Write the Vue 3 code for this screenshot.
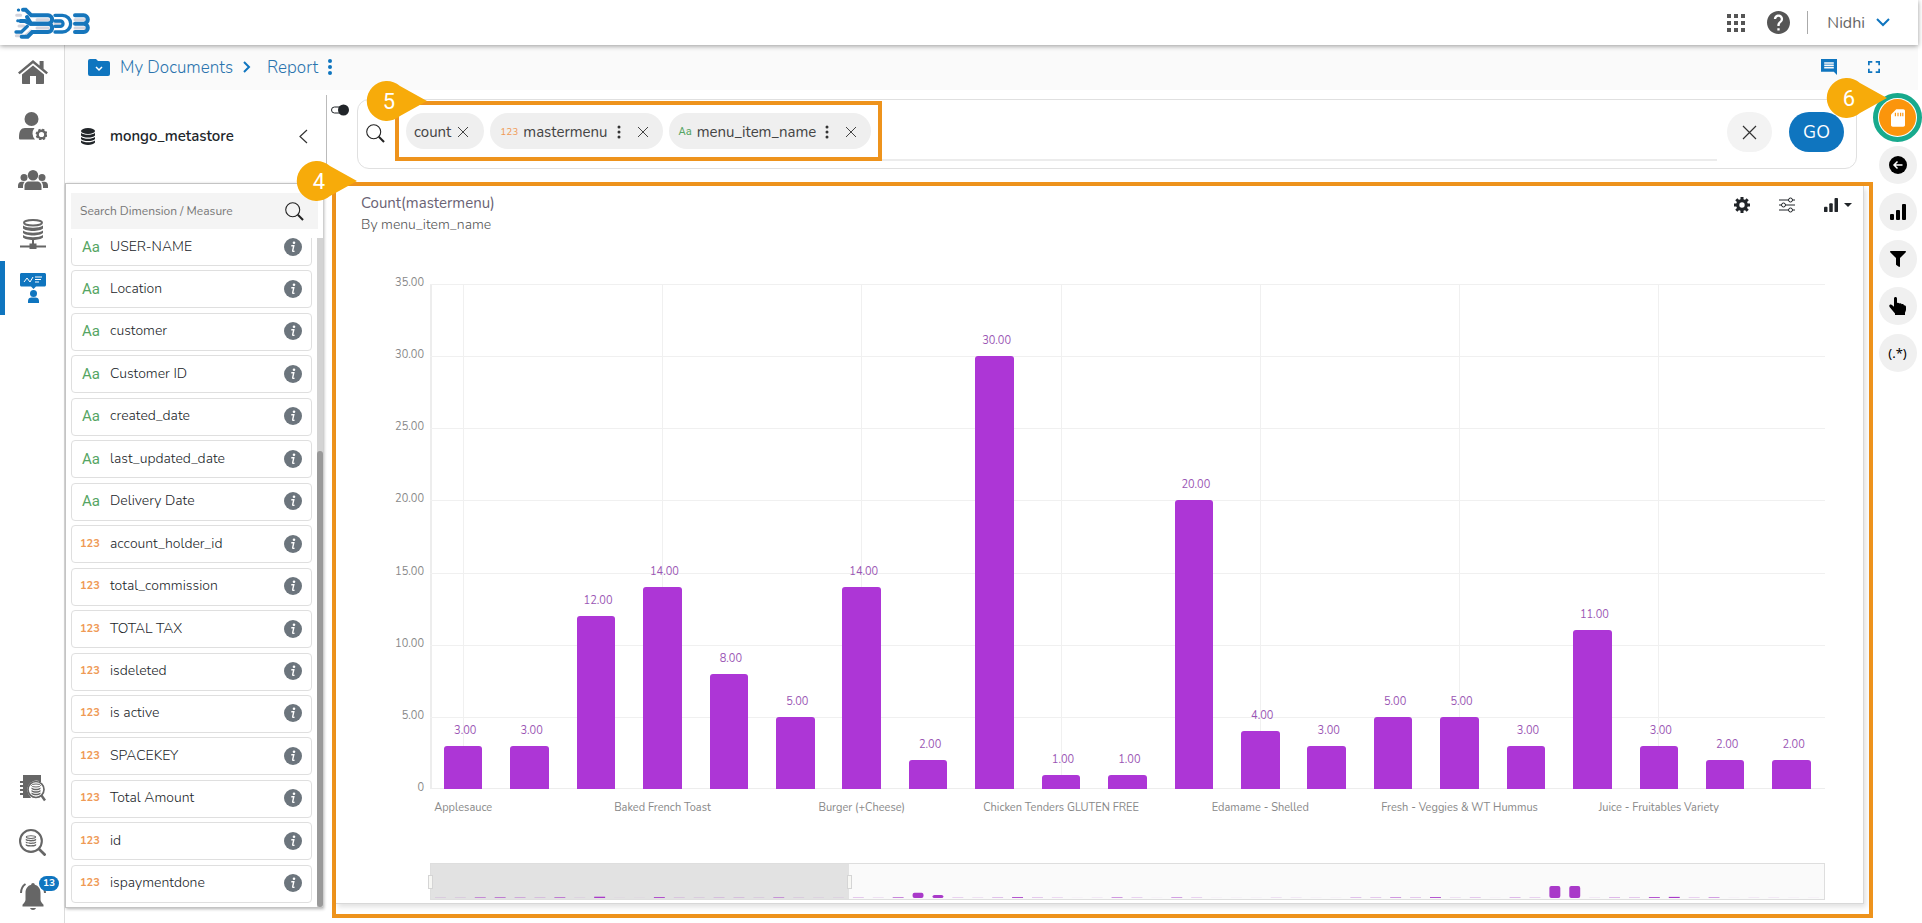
<script setup>
import { ref } from 'vue';

const icons = {
  home: { box: '0 0 30 24', w: 30, h: 24, body: '<path d="M15 0 0 12.4l1.6 1.9L15 3.3l13.4 11 1.6-1.9-4.4-3.6V1h-4v4.5z"/><path d="M15 5.4 4 14.5V23c0 .6.4 1 1 1h7v-8h6v8h7c.6 0 1-.4 1-1v-8.500z"/>' },
  userCog: { box: '0 0 28 28', w: 28, h: 28, body: '<circle cx="12.500" cy="7" r="7"/><path d="M0 25c0-6 2-9 6-9h9.500a8.500 8.500 0 0 0 .5 11.500H1.500C.6 27.500 0 27 0 26z"/><circle cx="22.500" cy="22.500" r="3.800" fill="none" stroke="currentColor" stroke-width="2.400"/><circle cx="22.500" cy="22.500" r="5" fill="none" stroke="currentColor" stroke-width="1.800" stroke-dasharray="2.200 1.727"/>' },
  users: { box: '0 0 30 20', w: 30, h: 20, body: '<circle cx="15" cy="5.200" r="5.200"/><circle cx="6" cy="7.500" r="3.500"/><circle cx="24" cy="7.500" r="3.500"/><path d="M6.500 20v-3.500c0-3.500 2-5 4.500-5h8c2.500 0 4.500 1.500 4.500 5V20zM0 18v-2.500c0-2.500 1.500-3.800 3.500-3.800h3.300C5.500 13 5 14.500 5 16.500V18zM30 18v-2.500c0-2.500-1.500-3.800-3.500-3.800h-3.300c1.300 1.300 1.800 2.800 1.800 4.800V18z"/>' },
  dataNet: { box: '0 0 26 30', w: 26, h: 30, body: '<ellipse cx="13" cy="3.700" rx="9" ry="2.700" fill="none" stroke="currentColor" stroke-width="2"/><path d="M3 6.500c4 3 16 3 20 0v3c-3 3.300-17 3.300-20 0zM3 11.500c4 3 16 3 20 0v2.500c-3 3.300-17 3.300-20 0zM3 16c4 3 16 3 20 0v2.500c-3 3.300-17 3.300-20 0zM12 20.500h2v4h2.500v2H26v2h-9.500v1.500h-7v-1.500H0v-2h9.500v-2H12z"/>' },
  analytics: { box: '0 0 26 30', w: 26, h: 30, body: '<path d="M1.500 0h23c.8 0 1.500.7 1.500 1.500V12c0 .8-.7 1.500-1.500 1.500H16l-2.500 2.500-2.500-2.500H1.500C.7 13.500 0 12.800 0 12V1.500C0 .7.7 0 1.500 0z"/><path d="m4 9 3-4 3 4 3-5M15 4h7M15 6.500h6M15 9h4" fill="none" stroke="#fff" stroke-width="1"/><circle cx="13.500" cy="20.500" r="3.500"/><path d="M8 30v-2c0-2.500 1.500-3.500 3.500-3.500h4c2 0 3.500 1 3.500 3.500v2z"/>' },
  bookSearch: { box: '0 0 26 27', w: 26, h: 27, body: '<path d="M3 0h18v7h-2V5H5V3H3z"/><path d="M3 2h16v4a9 9 0 0 0-9 15l1 2H3z"/><path d="M0 7h5M0 11h5M0 15h5M0 19h5" stroke="currentColor" stroke-width="2"/><circle cx="16" cy="14.500" r="8" fill="#fff" stroke="currentColor" stroke-width="1.700"/><path d="m21.500 20.500 3.500 5" stroke="currentColor" stroke-width="2.400"/><ellipse cx="16" cy="10.500" rx="4.500" ry="1.500" fill="none" stroke="currentColor"/><path d="M11.500 12.500c2 1.700 7 1.700 9 0v1.500c-2 1.700-7 1.700-9 0zM11.500 15c2 1.700 7 1.700 9 0v1.500c-2 1.700-7 1.700-9 0zM11.500 17.500c2 1.700 7 1.700 9 0V19c-2 1.700-7 1.700-9 0z"/>' },
  dataSearch: { box: '0 0 26 26', w: 27, h: 27, body: '<circle cx="11.500" cy="11.500" r="10.500" fill="none" stroke="currentColor" stroke-width="2"/><path d="m19 19 6.500 6.500" stroke="currentColor" stroke-width="2.600"/><ellipse cx="11.500" cy="7.800" rx="4.500" ry="1.300" fill="none" stroke="currentColor"/><path d="M6.500 9.500c2 1.500 8 1.500 10 0v1.300c-2 1.500-8 1.500-10 0zM6.500 12c2 1.500 8 1.500 10 0v1.300c-2 1.500-8 1.500-10 0zM6.500 14.500c2 1.500 8 1.500 10 0v1.300c-2 1.500-8 1.500-10 0z"/>' },
  bell: { box: '0 0 26 27', w: 26, h: 27, body: '<path d="M13 0c1 0 1.800.8 1.800 1.800 3.700 1 5.700 4 5.700 8v7c0 2 1.500 3 3 5v1.700H2.500V21.800c1.500-2 3-3 3-5v-7c0-4 2-7 5.700-8C11.200.8 12 0 13 0zM10 25h6c-.5 1.300-1.500 2-3 2s-2.500-.7-3-2z"/><path d="M5.500 1C2.500 3 1 6 1 10M20.500 1C23.500 3 25 6 25 10" fill="none" stroke="currentColor" stroke-width="2"/>' },
  back: { box: '0 0 18 18', w: 18, h: 18, body: '<circle cx="9" cy="9" r="9"/><path d="M13.500 9h-8M8.500 5.500 5 9l3.500 3.500" fill="none" stroke="#fff" stroke-width="1.500"/>' },
  bars: { box: '0 0 16 16', w: 16, h: 16, body: '<rect y="10" width="4" height="6" rx="1"/><rect x="6" y="6" width="4" height="10" rx="1"/><rect x="12" width="4" height="16" rx="1"/>' },
  filter: { box: '0 0 512 512', w: 16, h: 16, body: '<path d="M487.976 0H24.028C2.710 0-8.047 25.866 7.058 40.971L192 225.941V432c0 7.831 3.821 15.170 10.237 19.662l80 55.980C298.020 518.690 320 507.493 320 487.980V225.941l184.947-184.970C520.021 25.896 509.338 0 487.976 0z"/>' },
  hand: { box: '0 0 17 18', w: 17, h: 18, body: '<path d="M5 1.500C5 .6 5.600 0 6.500 0S8 .6 8 1.500V6c.8-.6 1.800-.4 2.300.5.900-.6 2-.3 2.500.7 1.100-.4 1.900.1 2.100 1 1.300-.2 2.100.6 2.100 1.800v2.500c0 1.500-1 2.500-1 3.500v2H6v-1.500L1 10.500C.2 9.500 0 8.500.6 8 1.400 7.200 2.600 7.500 3.300 8.200L5 9.800z"/>' }
};

const topNav = [
  { icon: 'home', label: 'Home' },
  { icon: 'userCog', label: 'Admin' },
  { icon: 'users', label: 'Users' },
  { icon: 'dataNet', label: 'Data Center' },
  { icon: 'analytics', label: 'Designer', active: true }
];
const bottomNav = [
  { icon: 'bookSearch', label: 'Catalog' },
  { icon: 'dataSearch', label: 'Data search' },
  { icon: 'bell', label: 'Notifications', badge: 13 }
];
const railTools = [
  { icon: 'back', label: 'Back' },
  { icon: 'bars', label: 'Charts' },
  { icon: 'filter', label: 'Filter' },
  { icon: 'hand', label: 'Select' }
];

const fields = [
  { name: 'USER-NAME', type: 'Aa' },
  { name: 'Location', type: 'Aa' },
  { name: 'customer', type: 'Aa' },
  { name: 'Customer ID', type: 'Aa' },
  { name: 'created_date', type: 'Aa' },
  { name: 'last_updated_date', type: 'Aa' },
  { name: 'Delivery Date', type: 'Aa' },
  { name: 'account_holder_id', type: '123' },
  { name: 'total_commission', type: '123' },
  { name: 'TOTAL TAX', type: '123' },
  { name: 'isdeleted', type: '123' },
  { name: 'is active', type: '123' },
  { name: 'SPACEKEY', type: '123' },
  { name: 'Total Amount', type: '123' },
  { name: 'id', type: '123' },
  { name: 'ispaymentdone', type: '123' }
];

const chips = ref([
  { name: 'count' },
  { name: 'mastermenu', type: '123' },
  { name: 'menu_item_name', type: 'Aa' }
]);
const query = ref('');
const fieldSearch = ref('');

const removeChip = (i) => chips.value.splice(i, 1);
const clearAll = () => {
  chips.value = [];
  query.value = '';
};

const MAX = 35;
const ticks = ['35.00', '30.00', '25.00', '20.00', '15.00', '10.00', '5.00'];
const values = [3, 3, 12, 14, 8, 5, 14, 2, 30, 1, 1, 20, 4, 3, 5, 5, 3, 11, 3, 2, 2];
// every third category gets a label and a grid line
const labels = [
  'Applesauce',
  'Baked French Toast',
  'Burger (+Cheese)',
  'Chicken Tenders GLUTEN FREE',
  'Edamame - Shelled',
  'Fresh - Veggies & WT Hummus',
  'Juice - Fruitables Variety'
];
const labelFor = (i) => (i % 3 === 0 ? labels[i / 3] : '');

// whole series, shown in the range selector
const overview = [
  ...values,
  6, 3, 14, 120, 70, 5, 3, 7, 20, 6, 4, 1, 2, 12, 5, 1, 11, 5, 1, 1, 1, 3, 2, 1, 1,
  7, 6, 12, 6, 20, 3, 6, 1, 8, 5, 280, 280, 2, 8, 6, 20, 26, 5, 11, 1, 2, 2, 1, 1
];
</script>

<template>
  <div class="page">
    <header class="topbar">
      <a href="#" class="logo" aria-label="BDB">
        <svg width="77" height="34" viewBox="40 15 231 102" fill="none" stroke-linecap="round">
          <g stroke="#d3d4dd" stroke-width="9">
            <path d="M51 43h12M58 75h14M50 104h12M78 30l14 12M80 102l14-12M112 56h34M112 81h34M166 68h14M226 56h30M226 81h30" />
          </g>
          <g stroke="#1676bc" stroke-width="12">
            <path d="M70 26h8l17 17h50a12 12 0 0 1 0 25H94L82 48" />
            <path d="M62 60h14l16 8h53a12 12 0 0 1 0 25H98l-14 14H66" />
            <path d="M49 93h16l18-17" stroke-width="10" />
            <path d="M166 43h22a25 25 0 0 1 0 50h-22M166 60h16a8 8 0 0 1 0 16h-16" stroke-width="10" />
            <path d="M226 43h26a12 12 0 0 1 0 25h-26M252 68a12 12 0 0 1 0 25h-26" />
            <path d="M56 27h1M54 59h1" stroke-width="9" />
          </g>
        </svg>
      </a>
      <div class="account">
        <button class="plain" aria-label="Apps">
          <svg width="18" height="18" viewBox="0 0 18 18" fill="#555">
            <path d="M0 0h4v4H0zM7 0h4v4H7zM14 0h4v4h-4zM0 7h4v4H0zM7 7h4v4H7zM14 7h4v4h-4zM0 14h4v4H0zM7 14h4v4H7zM14 14h4v4h-4z" />
          </svg>
        </button>
        <button class="plain" aria-label="Help">
          <svg width="23" height="23" viewBox="2 2 20 20" fill="#555">
            <path d="M12 2C6.480 2 2 6.480 2 12s4.480 10 10 10 10-4.480 10-10S17.520 2 12 2zm1 17h-2v-2h2v2zm2.070-7.750l-.9.920C13.450 12.900 13 13.500 13 15h-2v-.5c0-1.100.45-2.100 1.170-2.830l1.240-1.260c.37-.36.59-.86.59-1.410 0-1.100-.9-2-2-2s-2 .9-2 2H8c0-2.210 1.790-4 4-4s4 1.790 4 4c0 .88-.36 1.680-.93 2.250z" />
          </svg>
        </button>
        <span class="split"></span>
        <button class="plain user">
          Nidhi
          <svg width="14" height="9" viewBox="0 0 14 9" fill="none" stroke="#0f75bf" stroke-width="2"><path d="m1 1 6 6 6-6" /></svg>
        </button>
      </div>
    </header>

    <div class="body">
      <nav class="sidenav">
        <a v-for="item in topNav" :key="item.icon" href="#" :class="{ active: item.active }" :aria-label="item.label">
          <svg :width="icons[item.icon].w" :height="icons[item.icon].h" :viewBox="icons[item.icon].box" fill="currentColor" v-html="icons[item.icon].body"></svg>
        </a>
        <div class="spacer"></div>
        <a v-for="item in bottomNav" :key="item.icon" href="#" :aria-label="item.label">
          <svg :width="icons[item.icon].w" :height="icons[item.icon].h" :viewBox="icons[item.icon].box" fill="currentColor" v-html="icons[item.icon].body"></svg>
          <span v-if="item.badge" class="badge">{{ item.badge }}</span>
        </a>
      </nav>

      <main class="main">
        <div class="crumbs">
          <svg width="22" height="17" viewBox="0 0 22 17">
            <path d="M2 0h6l2 2h10a2 2 0 0 1 2 2v11a2 2 0 0 1-2 2H2a2 2 0 0 1-2-2V2a2 2 0 0 1 2-2z" fill="#0f75bf" />
            <path d="m8 8 3 3 3-3" fill="none" stroke="#fff" stroke-width="1.500" />
          </svg>
          <a href="#" class="docs">My Documents</a>
          <svg class="arrow" width="8" height="12" viewBox="0 0 8 12" fill="none" stroke="#0f75bf" stroke-width="2"><path d="m1 1 5 5-5 5" /></svg>
          <a href="#" class="report">Report</a>
          <button class="plain" aria-label="Report menu">
            <svg width="4" height="16" viewBox="0 0 4 16" fill="#0f75bf"><circle cx="2" cy="2" r="2" /><circle cx="2" cy="8" r="2" /><circle cx="2" cy="14" r="2" /></svg>
          </button>
          <div class="spacer"></div>
          <button class="plain comment" aria-label="Comments">
            <svg width="16" height="16" viewBox="2 2 20 20" fill="#0f75bf">
              <path d="M22 2H2v16h16l4 4zM18 14H6v-2h12v2zm0-3H6V9h12v2zm0-3H6V6h12v2z" />
            </svg>
          </button>
          <button class="plain" aria-label="Full screen">
            <svg width="12" height="12" viewBox="5 5 14 14" fill="#0f75bf">
              <path d="M7 14H5v5h5v-2H7v-3zm-2-4h2V7h3V5H5v5zm12 7h-3v2h5v-5h-2v3zM14 5v2h3v3h2V5h-5z" />
            </svg>
          </button>
        </div>

        <div class="workspace">
          <aside class="panel">
            <div class="store">
              <svg width="14" height="17" viewBox="0 0 14 17" fill="#212529">
                <ellipse cx="7" cy="3" rx="7" ry="3" />
                <path d="M0 5c3 2.400 11 2.400 14 0v2.500c-2 2.700-12 2.700-14 0zM0 9c3 2.400 11 2.400 14 0v2c-2 2.700-12 2.700-14 0zM0 12.500c3 2.400 11 2.400 14 0v2c-2 3.300-12 3.300-14 0z" />
              </svg>
              <h2>mongo_metastore</h2>
              <button class="plain" aria-label="Collapse">
                <svg width="9" height="15" viewBox="0 0 9 15" fill="none" stroke="#333" stroke-width="1.200"><path d="M8 1 1 7.500 8 14" /></svg>
              </button>
            </div>
            <div class="fields">
              <div class="field-search">
                <input v-model="fieldSearch" type="text" placeholder="Search Dimension / Measure" aria-label="Search Dimension / Measure" />
                <svg width="19" height="19" viewBox="0 0 16 16" fill="none" stroke="#222"><circle cx="6.500" cy="6.500" r="5.900" stroke-width=".9" /><path d="m10.800 10.800 4.400 4.400" stroke-width="1.700" /></svg>
              </div>
              <div class="field-scroll">
                <ul>
                  <li v-for="f in fields" :key="f.name">
                    <span class="type" :class="f.type === 'Aa' ? 'dim' : 'measure'">{{ f.type }}</span>
                    <span class="name">{{ f.name }}</span>
                    <button class="plain" :aria-label="'About ' + f.name">
                      <svg width="18" height="18" viewBox="0 0 18 18">
                        <circle cx="9" cy="9" r="9" fill="#6c757d" />
                        <circle cx="10" cy="4.800" r="1.300" fill="#fff" />
                        <path d="M7.300 7.700h2.500L8.700 12.600q-.2 1.200 1.800.6" fill="none" stroke="#fff" stroke-width="1.400" />
                      </svg>
                    </button>
                  </li>
                </ul>
                <div class="scrollbar"><div class="thumb"></div></div>
              </div>
            </div>
          </aside>

          <section class="content">
            <div class="query-row">
              <button class="plain toggle" aria-label="Toggle search mode">
                <svg width="18" height="12" viewBox="0 0 18 12"><rect x=".5" y="3" width="12" height="6" rx="3" fill="none" stroke="#212529" /><circle cx="12.500" cy="6" r="5.500" fill="#212529" /></svg>
              </button>
              <div class="query">
                <svg class="lens" width="19" height="19" viewBox="0 0 16 16" fill="none" stroke="#222"><circle cx="6.500" cy="6.500" r="5.900" stroke-width=".9" /><path d="m10.800 10.800 4.400 4.400" stroke-width="1.700" /></svg>
                <div class="chips">
                  <div class="pin pin-query">
                    <svg width="62" height="40" viewBox="0 0 62 40" fill="#f7ab0a"><path d="M62 20 35 5A20 20 0 1 0 35 35z" /></svg>
                    <span>5</span>
                  </div>
                  <div v-for="(chip, i) in chips" :key="chip.name" class="chip" :class="{ typed: chip.type }">
                    <span v-if="chip.type" class="chip-type" :class="chip.type === 'Aa' ? 'dim' : 'measure'">{{ chip.type }}</span>
                    <span>{{ chip.name }}</span>
                    <button v-if="chip.type" class="plain dots" aria-label="Options">
                      <svg width="4" height="14" viewBox="0 0 4 14" fill="#333"><circle cx="2" cy="2" r="1.500" /><circle cx="2" cy="7" r="1.500" /><circle cx="2" cy="12" r="1.500" /></svg>
                    </button>
                    <button class="plain" aria-label="Remove" @click="removeChip(i)">
                      <svg width="12" height="12" viewBox="0 0 12 12" stroke="#444"><path d="m1 1 10 10M11 1 1 11" /></svg>
                    </button>
                  </div>
                </div>
                <input v-model="query" type="text" class="query-input" aria-label="Query" />
                <button class="clear" aria-label="Clear" @click="clearAll">
                  <svg width="15" height="15" viewBox="0 0 15 15" stroke="#333" stroke-width="1.200"><path d="m1 1 13 13M14 1 1 14" /></svg>
                </button>
                <button class="go">GO</button>
              </div>
            </div>

            <div class="chart-frame">
              <div class="pin pin-chart">
                <svg width="62" height="40" viewBox="0 0 62 40" fill="#f7ab0a"><path d="M62 20 35 5A20 20 0 1 0 35 35z" /></svg>
                <span>4</span>
              </div>
              <div class="card">
                <div class="card-head">
                  <div>
                    <h3>Count(mastermenu)</h3>
                    <p>By menu_item_name</p>
                  </div>
                  <div class="tools">
                    <button class="plain" aria-label="Settings">
                      <svg width="16" height="16" viewBox="0 0 16 16" fill="none" stroke="#212529">
                        <circle cx="8" cy="8" r="4.300" stroke-width="3.200" />
                        <path d="M8 0v3M8 13v3M0 8h3M13 8h3M2.300 2.300l2.200 2.200M11.500 11.500l2.200 2.200M2.300 13.700l2.200-2.200M11.500 4.500l2.200-2.200" stroke-width="3" />
                      </svg>
                    </button>
                    <button class="plain" aria-label="Filters">
                      <svg width="16" height="16" viewBox="0 0 16 16" fill="#fff" stroke="#212529"><path d="M0 3h16M0 8h16M0 13h16" /><circle cx="11.500" cy="3" r="2" /><circle cx="4.500" cy="8" r="2" /><circle cx="11.500" cy="13" r="2" /></svg>
                    </button>
                    <button class="plain kind" aria-label="Chart type">
                      <svg width="14" height="14" viewBox="0 0 16 16" fill="#212529" v-html="icons.bars.body"></svg>
                      <svg width="8" height="4" viewBox="0 0 8 4" fill="#212529"><path d="M0 0h8L4 4z" /></svg>
                    </button>
                  </div>
                </div>

                <div class="chart">
                  <div class="y-axis">
                    <span v-for="t in ticks" :key="t">{{ t }}</span>
                    <span class="zero">0</span>
                  </div>
                  <div class="plot">
                    <div class="rows"><i v-for="t in ticks" :key="t"></i></div>
                    <div class="cols">
                      <div v-for="(v, i) in values" :key="i" class="col" :class="{ marked: i % 3 === 0 }">
                        <span class="value">{{ v }}.00</span>
                        <div class="bar" :style="{ height: (v / MAX) * 100 + '%' }"></div>
                      </div>
                    </div>
                  </div>
                  <div class="x-axis">
                    <span v-for="(v, i) in values" :key="i">{{ labelFor(i) }}</span>
                  </div>
                </div>

                <div class="brush">
                  <div class="range"><span class="handle"></span><span class="handle"></span></div>
                  <svg width="100%" height="34" :viewBox="'0 0 ' + overview.length * 20 + ' 34'" preserveAspectRatio="none" fill="#a93ac9">
                    <rect v-for="(v, i) in overview" :key="i" :x="i * 20 + 4" :y="34 - v * 0.043" width="11" :height="v * 0.043" :rx="v > 60 ? 2 : 0" />
                  </svg>
                </div>
              </div>
            </div>
          </section>

          <div class="rail">
            <div class="ring">
              <div class="pin pin-rail">
                <svg width="62" height="40" viewBox="0 0 62 40" fill="#f7ab0a"><path d="M62 20 35 5A20 20 0 1 0 35 35z" /></svg>
                <span>6</span>
              </div>
              <button class="round save" aria-label="Storage">
                <svg width="14" height="18" viewBox="4 2 16 20" fill="#fff"><path d="M18 2h-8L4 8v12c0 1.100.9 2 2 2h12c1.100 0 2-.9 2-2V4c0-1.100-.9-2-2-2z" /><path d="M9 6v4M12 6v4M15 6v4M17.500 6v4" stroke="#fb950c" stroke-width="1.300" /></svg>
              </button>
            </div>
            <button v-for="tool in railTools" :key="tool.icon" class="round" :aria-label="tool.label">
              <svg :width="icons[tool.icon].w" :height="icons[tool.icon].h" :viewBox="icons[tool.icon].box" fill="#000" v-html="icons[tool.icon].body"></svg>
            </button>
            <button class="round">(.*)</button>
          </div>
        </div>
      </main>
    </div>
  </div>
</template>

<style>
body {
  margin: 0;
  background: #fff;
}
</style>

<style scoped>
.page {
  display: flex;
  flex-direction: column;
  height: 100vh;
  min-height: 720px;
  overflow: hidden;
  font-family: Nunito, Lato, sans-serif;
  font-size: 14px;
  color: #212529;
}

.page * {
  box-sizing: border-box;
}

button,
input {
  font: inherit;
  color: inherit;
}

svg {
  display: block;
  flex: none;
}

a {
  text-decoration: none;
  color: #2b74ae;
}

.plain {
  display: flex;
  align-items: center;
  padding: 0;
  border: 0;
  background: none;
  cursor: pointer;
}

.spacer {
  flex: 1;
}

.dim {
  color: #55a563;
}

.measure {
  color: #ef9a55;
}

/* header */
.topbar {
  display: flex;
  align-items: center;
  justify-content: space-between;
  height: 45px;
  margin-right: 4px;
  padding: 0 28px 0 13px;
  box-shadow: 0 1px 5px rgba(0, 0, 0, 0.4);
  z-index: 2;
}

.account {
  display: flex;
  align-items: center;
}

.account .plain + .plain {
  margin-left: 22px;
}

.split {
  width: 1px;
  height: 23px;
  margin: 0 19px 0 17px;
  background: #aaa;
}

.user {
  gap: 11px;
  font-size: 16px;
  color: #666;
}

/* side navigation */
.body {
  display: flex;
  flex: 1;
  min-height: 0;
}

.sidenav {
  display: flex;
  flex-direction: column;
  width: 65px;
  flex: none;
  border-right: 1px solid #dcdcdc;
}

.sidenav a {
  position: relative;
  display: flex;
  align-items: center;
  justify-content: center;
  height: 54px;
  padding-left: 1px;
  color: #666;
}

.sidenav a.active {
  color: #0f75bf;
  box-shadow: inset 5px 0 0 #0f75bf;
}

.badge {
  position: absolute;
  left: 39px;
  top: 7px;
  width: 20px;
  border-radius: 8px;
  background: #0f75bf;
  color: #fff;
  font-size: 10px;
  line-height: 15px;
  font-weight: 700;
  text-align: center;
}

/* breadcrumb */
.main {
  display: flex;
  flex-direction: column;
  flex: 1;
  min-width: 0;
}

.crumbs {
  display: flex;
  align-items: center;
  height: 45px;
  flex: none;
  margin-right: 4px;
  padding: 0 38px 1px 23px;
  background: #fafafa;
  font-size: 17px;
  font-weight: 300;
}

.docs {
  margin-left: 10px;
}

.arrow {
  margin: 0 16px 0 10px;
}

.report {
  margin-right: 10px;
}

.comment {
  margin-right: 31px;
}

.workspace {
  display: flex;
  flex: 1;
  min-height: 0;
}

/* field list */
.panel {
  display: flex;
  flex-direction: column;
  width: 262px;
  flex: none;
  padding: 5px 0 15px;
}

.store {
  display: flex;
  align-items: center;
  height: 88px;
  flex: none;
  padding: 0 18px 6px 16px;
  border-right: 1px solid #bbb;
}

.store h2 {
  flex: 1;
  margin: 0 0 0 15px;
  font-size: 15px;
  font-weight: 600;
}

.fields {
  display: flex;
  flex-direction: column;
  flex: 1;
  min-height: 0;
  margin-right: 4px;
  border: 1px solid #c4c4c4;
  border-right: 0;
  box-shadow: 1px 1px 3px rgba(0, 0, 0, 0.3);
}

.field-search {
  display: flex;
  align-items: center;
  height: 36px;
  flex: none;
  margin: 9px 5px;
  padding: 0 14px 0 9px;
  background: #f4f4f4;
}

.field-search input {
  flex: 1;
  min-width: 0;
  padding: 0;
  border: 0;
  outline: 0;
  background: none;
  font-size: 12px;
}

.field-search input::placeholder {
  color: #777;
}

.field-scroll {
  display: flex;
  flex: 1;
  min-height: 0;
  overflow: hidden;
}

.field-scroll ul {
  display: flex;
  flex-direction: column;
  justify-content: space-between;
  flex: 1;
  margin: -10px 5px 4px;
  padding: 0;
  list-style: none;
}

.field-scroll li {
  display: flex;
  align-items: center;
  height: 38px;
  flex: none;
  padding: 0 9px 1px 8px;
  border: 1px solid #dfdfdf;
  border-radius: 4px;
  line-height: 16px;
}

.type {
  width: 30px;
  font-size: 11px;
  font-weight: 700;
}

.type.dim {
  padding-left: 2px;
  font-family: Roboto, sans-serif;
  font-size: 15px;
  font-weight: 400;
}

.name {
  flex: 1;
  font-weight: 300;
}

.scrollbar {
  width: 6px;
  padding-top: 213px;
  background: #d3d3d3;
}

.thumb {
  height: 100%;
  border-radius: 3px;
  background: #999;
}

/* query bar */
.content {
  display: flex;
  flex-direction: column;
  flex: 1;
  min-width: 0;
}

.query-row {
  display: flex;
  align-items: flex-start;
  padding: 9px 16px 13px 4px;
}

.toggle {
  margin: 5px 8px 0 0;
}

.query {
  display: flex;
  align-items: flex-start;
  flex: 1;
  height: 70px;
  padding: 1px 12px 0 8px;
  border: 1px solid #e0e0e0;
  border-radius: 12px;
}

.lens {
  margin: 23px 10px 0 0;
}

.chips {
  position: relative;
  display: flex;
  gap: 6px;
  padding: 8px 7px;
  border: 4px solid #ee931c;
}

.chip {
  display: flex;
  align-items: center;
  gap: 6px;
  height: 36px;
  padding: 1px 15px 0 8px;
  border-radius: 18px;
  background: #efefef;
  font-size: 15px;
  color: #444;
}

.chip.typed {
  gap: 5px;
  padding: 1px 14px 0 10px;
}

.chip-type {
  font-size: 10px;
}

.chip-type.dim {
  font-family: Roboto, sans-serif;
  font-size: 11px;
}

.dots {
  margin: 0 11px 0 4px;
}

.query-input {
  flex: 1;
  min-width: 0;
  height: 60px;
  padding: 0 12px;
  border: 0;
  border-bottom: 2px solid #ececec;
  outline: 0;
  background: none;
  font-size: 16px;
}

.clear,
.go {
  display: flex;
  align-items: center;
  justify-content: center;
  height: 40px;
  margin-top: 11px;
  padding: 0;
  border: 0;
  border-radius: 20px;
  cursor: pointer;
}

.clear {
  width: 45px;
  margin-left: 10px;
  margin-right: 17px;
  background: #f3f3f3;
}

.go {
  width: 55px;
  background: #0f75bf;
  color: #fff;
  font-size: 18px;
}

/* numbered callouts */
.pin {
  position: absolute;
  z-index: 3;
}

.pin span {
  position: absolute;
  inset: 0 14px 0 0;
  color: #fff;
  font-family: Roboto, sans-serif;
  font-size: 22px;
  line-height: 42px;
  text-align: center;
}

.pin-query {
  left: -34px;
  top: -24px;
}

.pin-chart {
  left: -41px;
  top: -25px;
}

.pin-rail {
  left: -53px;
  top: -20px;
}

/* chart */
.chart-frame {
  position: relative;
  display: flex;
  flex: 1;
  min-height: 0;
  margin: 0 0 5px 5px;
  padding: 0 5px 10px 0;
  border: 4px solid #ee931c;
}

.card {
  display: flex;
  flex-direction: column;
  flex: 1;
  min-width: 0;
  padding: 0 38px 3px 25px;
  border-right: 1px solid #d8d8d8;
  border-bottom: 1px solid #d8d8d8;
  box-shadow: 2px 3px 5px rgba(0, 0, 0, 0.12);
}

.card-head {
  display: flex;
  justify-content: space-between;
  height: 98px;
  flex: none;
  padding-top: 7px;
}

.card h3,
.card p {
  margin: 0;
  font-weight: 400;
}

.card h3 {
  font-size: 15px;
  line-height: 20px;
  color: #6a6375;
}

.card p {
  font-size: 14px;
  font-weight: 300;
  line-height: 24px;
  color: #555;
}

.tools {
  display: flex;
  align-items: center;
  gap: 29px;
  height: 24px;
  margin-right: -27px;
}

.kind {
  gap: 6px;
}

.chart {
  display: grid;
  grid-template-columns: 69px 1fr;
  grid-template-rows: 1fr 74px;
  flex: 1;
  min-height: 0;
  font-size: 11px;
  color: #888;
}

.y-axis {
  display: flex;
  flex-direction: column;
  padding-right: 6px;
  text-align: right;
}

.y-axis span {
  flex: 1;
  line-height: 16px;
  margin-top: -9px;
  margin-bottom: 9px;
}

.y-axis .zero {
  flex: none;
  height: 0;
  margin-bottom: 9px;
}

.plot {
  display: grid;
  box-shadow: inset 2px -1px #ededed;
}

.rows,
.cols {
  display: flex;
  grid-area: 1 / 1;
  min-height: 0;
}

.rows {
  flex-direction: column;
}

.rows i {
  flex: 1;
  border-top: 1px solid #f0f0f0;
}

.col {
  display: flex;
  flex-direction: column;
  align-items: center;
  justify-content: flex-end;
  flex: 1;
}

.col.marked {
  background: linear-gradient(#f0f0f0, #f0f0f0) center / 1px 100% no-repeat;
}

.value {
  padding: 0 0 7px 4px;
  line-height: 16px;
  color: #9a55b4;
}

.bar {
  width: 58%;
  flex: none;
  border-radius: 3px 3px 0 0;
  background: #ad36d6;
}

.x-axis {
  display: flex;
  grid-column: 2;
  padding-top: 10px;
}

.x-axis span {
  display: flex;
  justify-content: center;
  flex: 1 1 0;
  width: 0;
  line-height: 18px;
  white-space: nowrap;
}

.brush {
  position: relative;
  height: 37px;
  flex: none;
  margin-left: 69px;
  border: 1px solid #dedede;
  background: #fafafa;
}

.brush > svg {
  position: relative;
}

.range {
  position: absolute;
  inset: 0 70% 0 0;
  display: flex;
  align-items: center;
  justify-content: space-between;
  background: #e2e2e2;
}

.handle {
  width: 5px;
  height: 14px;
  margin: 0 -3px;
  border: 1px solid #d5d5d5;
  background: #f7f7f4;
}

/* right tool rail */
.rail {
  display: flex;
  flex-direction: column;
  align-items: center;
  gap: 9px;
  width: 49px;
  flex: none;
  padding-top: 3px;
}

.ring {
  position: relative;
  display: flex;
  align-items: center;
  justify-content: center;
  width: 49px;
  height: 49px;
  margin-bottom: -5px;
  border: 5px solid #18aa8d;
  border-radius: 50%;
}

.round {
  display: flex;
  align-items: center;
  justify-content: center;
  width: 38px;
  height: 38px;
  padding: 0 0 1px;
  border: 0;
  border-radius: 50%;
  background: #f0f0f0;
  color: #000;
  font-family: "Noto Sans", sans-serif;
  font-size: 13px;
  cursor: pointer;
}

.round.save {
  width: 37px;
  height: 37px;
  padding: 0;
  background: #fb950c;
}
</style>
